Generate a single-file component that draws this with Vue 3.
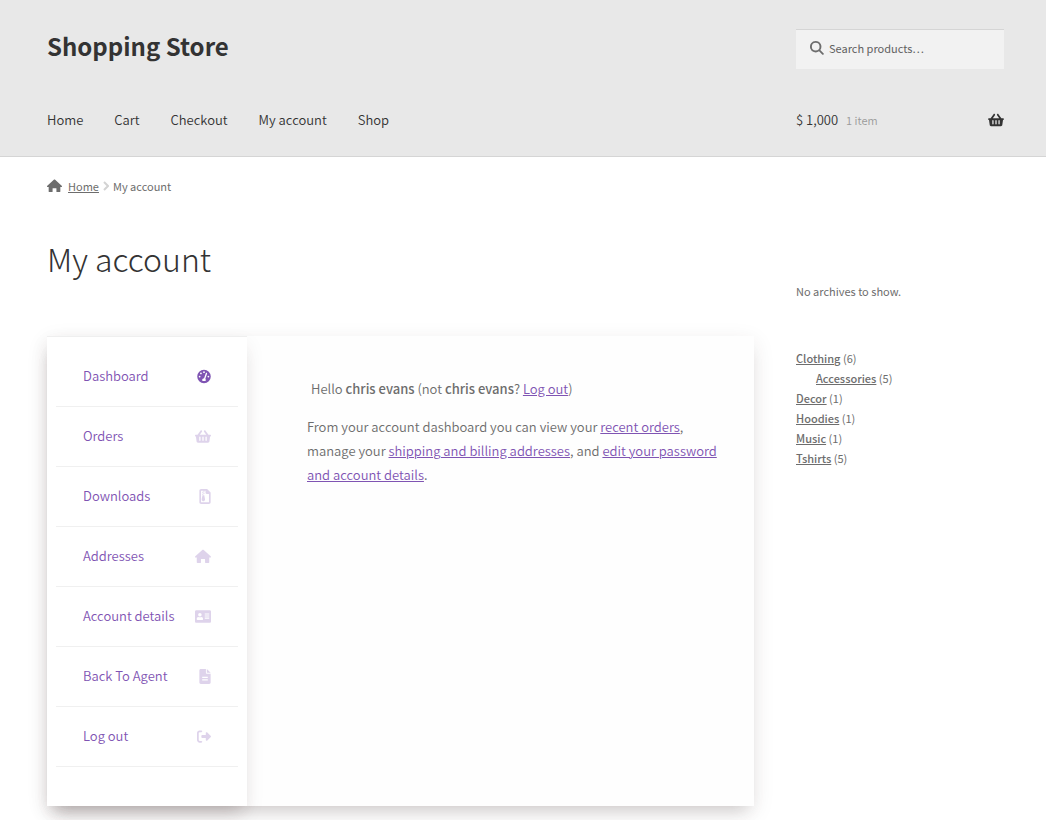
<script setup>
const basket = 'M576 216v16c0 13.255-10.745 24-24 24h-8l-26.113 182.788C514.509 462.435 494.257 480 470.37 480H105.63c-23.887 0-44.139-17.565-47.518-41.212L32 256h-8c-13.255 0-24-10.745-24-24v-16c0-13.255 10.745-24 24-24h67.341l106.78-146.821c10.395-14.292 30.407-17.453 44.701-7.058 14.293 10.395 17.453 30.408 7.058 44.701L170.477 192h235.046L326.12 82.821c-10.395-14.292-7.234-34.306 7.059-44.701 14.291-10.395 34.306-7.235 44.701 7.058L484.659 192H552c13.255 0 24 10.745 24 24zM312 392V280c0-13.255-10.745-24-24-24s-24 10.745-24 24v112c0 13.255 10.745 24 24 24s24-10.745 24-24zm112 0V280c0-13.255-10.745-24-24-24s-24 10.745-24 24v112c0 13.255 10.745 24 24 24s24-10.745 24-24zm-224 0V280c0-13.255-10.745-24-24-24s-24 10.745-24 24v112c0 13.255 10.745 24 24 24s24-10.745 24-24z'
const home = 'M262 19c15-13 37-13 52 0l250 232c20 18 13 43-14 43h-38v172c0 15-10 24-24 24H378c-10 0-16-6-16-16V362c0-10-6-16-16-16H230c-10 0-16 6-16 16v112c0 10-6 16-16 16H88c-14 0-24-9-24-24V294H26c-27 0-34-25-14-43z'

const nav = ['Home', 'Cart', 'Checkout', 'My account', 'Shop']

const accountMenu = [
  {
    label: 'Dashboard',
    box: '0 0 512 512',
    path: 'M256 8a248 248 0 1 0 0 496a248 248 0 1 0 0-496zM256 64a32 32 0 1 1 0 64a32 32 0 1 1 0-64zM144 112a32 32 0 1 1 0 64a32 32 0 1 1 0-64zM96 224a32 32 0 1 1 0 64a32 32 0 1 1 0-64zM416 224a32 32 0 1 1 0 64a32 32 0 1 1 0-64zM352 121c13 5 20 18 16 31l-63 189c9 11 15 27 15 43c0 16-3 24-8 32H200c-5-8-8-16-8-32c0-35 29-64 67-64l63-184c4-12 17-19 30-15z',
    size: 'round',
    active: true,
  },
  { label: 'Orders', box: '0 0 576 512', path: basket, size: 'wide' },
  {
    label: 'Downloads',
    box: '0 0 384 512',
    path: 'M60 0h204l120 120v332c0 33-27 60-60 60H60c-33 0-60-27-60-60V60C0 27 27 0 60 0zM56 56v400h272V170H250c-22 0-40-18-40-40V56h-34v36h-40V56zM96 92h40v36H96zM136 128h40v36h-40zM96 164h40v36H96zM106 216h60l26 124c8 45-18 76-56 76s-64-31-56-76z',
    size: 'narrow',
  },
  { label: 'Addresses', box: '0 0 576 512', path: home, size: 'wide' },
  {
    label: 'Account details',
    box: '0 0 576 512',
    path: 'M48 32h480c27 0 48 21 48 48v352c0 27-21 48-48 48H48c-27 0-48-21-48-48V80c0-27 21-48 48-48zM176 128a64 64 0 1 0 0 128a64 64 0 1 0 0-128zM120 272c-34 0-56 26-56 58v38c0 10 6 16 16 16h192c10 0 16-6 16-16v-38c0-32-22-58-56-58c-36 20-76 20-112 0zM352 144v40h160v-40zM352 220v40h160v-40zM352 296v40h160v-40z',
    size: 'wide',
  },
  {
    label: 'Back To Agent',
    box: '0 0 384 512',
    path: 'M48 0h176v136c0 14 10 24 24 24h136v304c0 27-21 48-48 48H48c-27 0-48-21-48-48V48C0 21 21 0 48 0zM256 0l128 128H256zM96 264v40h192v-40zM96 352v40h192v-40z',
    size: 'narrow',
  },
  {
    label: 'Log out',
    box: '0 0 512 512',
    path: 'M160 96c18 0 32-14 32-32s-14-32-32-32H96C43 32 0 75 0 128v256c0 53 43 96 96 96h64c18 0 32-14 32-32s-14-32-32-32H96c-18 0-32-14-32-32V128c0-18 14-32 32-32zM505 273c9-9 9-24 0-34L377 111c-9-9-23-12-35-7s-20 17-20 30v66H192c-18 0-32 14-32 32v48c0 18 14 32 32 32h130v66c0 13 8 25 20 30s26 2 35-7z',
    size: 'round',
  },
]

const categories = [
  { name: 'Clothing', count: 6, children: [{ name: 'Accessories', count: 5 }] },
  { name: 'Decor', count: 1 },
  { name: 'Hoodies', count: 1 },
  { name: 'Music', count: 1 },
  { name: 'Tshirts', count: 5 },
]
</script>

<template>
  <div class="page">
    <header class="site-header">
      <div class="columns brand-row">
        <a class="site-title" href="#">Shopping Store</a>
        <form class="search" role="search" @submit.prevent>
          <svg class="search-icon" viewBox="0 0 512 512" aria-hidden="true">
            <path fill-rule="evenodd" d="M208 0a208 208 0 1 0 122 376l124 124c9 9 24 9 33 0l14-14c9-9 9-24 0-33L377 329A208 208 0 0 0 208 0zM208 68a140 140 0 1 1 0 280a140 140 0 1 1 0-280z" />
          </svg>
          <input type="search" placeholder="Search products…" aria-label="Search products" />
        </form>
      </div>
      <div class="columns nav-row">
        <nav class="main-nav" aria-label="Primary">
          <a v-for="item in nav" :key="item" href="#">{{ item }}</a>
        </nav>
        <a class="cart" href="#">
          <span>$ 1,000</span>
          <span class="cart-count">1 item</span>
          <svg class="cart-icon" viewBox="0 0 576 512" aria-hidden="true"><path :d="basket" /></svg>
        </a>
      </div>
    </header>

    <nav class="breadcrumb" aria-label="Breadcrumb">
      <svg class="crumb-home" viewBox="0 0 576 512" aria-hidden="true"><path :d="home" /></svg>
      <a href="#">Home</a>
      <svg class="crumb-sep" viewBox="0 0 6 10" aria-hidden="true"><path d="M1 1l4 4l-4 4" /></svg>
      <span>My account</span>
    </nav>

    <div class="columns content">
      <main>
        <h1>My account</h1>
        <div class="account">
          <nav class="account-menu" aria-label="Account">
            <ul>
              <li v-for="item in accountMenu" :key="item.label">
                <a href="#" :class="{ active: item.active }">
                  {{ item.label }}
                  <svg :class="item.size" :viewBox="item.box" aria-hidden="true">
                    <path fill-rule="evenodd" :d="item.path" />
                  </svg>
                </a>
              </li>
            </ul>
          </nav>
          <section class="account-body">
            <p class="hello">
              Hello <strong>chris evans</strong> (not <strong>chris evans</strong>? <a href="#">Log out</a>)
            </p>
            <p>
              From your account dashboard you can view your <a href="#">recent orders</a>, manage your
              <a href="#">shipping and billing addresses</a>, and
              <a href="#">edit your password and account details</a>.
            </p>
          </section>
        </div>
      </main>

      <aside>
        <p>No archives to show.</p>
        <ul class="categories">
          <li v-for="cat in categories" :key="cat.name">
            <a href="#">{{ cat.name }}</a> ({{ cat.count }})
            <ul v-if="cat.children">
              <li v-for="child in cat.children" :key="child.name">
                <a href="#">{{ child.name }}</a> ({{ child.count }})
              </li>
            </ul>
          </li>
        </ul>
      </aside>
    </div>
  </div>
</template>

<style>
body {
  background: #fff;
}
</style>

<style scoped>
.page {
  font-family: "Noto Sans CJK SC", sans-serif;
  font-size: 13px;
  font-weight: 350;
  line-height: 24px;
  color: #6d6d6d;
}

.page * {
  box-sizing: border-box;
}

ul {
  list-style: none;
  margin: 0;
  padding: 0;
}

p {
  margin: 0;
}

.columns {
  display: grid;
  grid-template-columns: minmax(0, 1fr) 208px;
  column-gap: 42px;
  padding: 0 42px 0 47px;
}

.site-header {
  background: #e8e8e8;
  border-bottom: 1px solid #d5d5d5;
  padding-top: 29px;
}

.site-title {
  color: #333;
  font-size: 24px;
  font-weight: 700;
  line-height: 34px;
  text-decoration: none;
}

.search {
  display: flex;
  align-items: center;
  gap: 5px;
  height: 40px;
  padding: 0 14px 3px;
  background: #f2f2f2;
  border-top: 1px solid #d5d5d5;
}

.search-icon {
  flex: none;
  width: 14px;
  height: 14px;
  fill: #6d6d6d;
}

.search input {
  flex: 1;
  min-width: 0;
  padding: 0;
  border: 0;
  outline: 0;
  background: transparent;
  color: #6d6d6d;
  font: inherit;
  font-size: 11px;
  font-weight: 400;
}

.search input::placeholder {
  color: #616161;
}

.nav-row {
  padding-top: 39px;
  padding-bottom: 24px;
}

.main-nav {
  display: flex;
  gap: 31px;
}

.main-nav a,
.cart {
  color: #333;
  text-decoration: none;
}

.cart {
  display: flex;
  align-items: center;
  gap: 8px;
}

.cart-count {
  font-size: 11px;
  color: #9a9a9a;
}

.cart-icon {
  width: 16px;
  height: 14px;
  margin-left: auto;
  fill: #333;
}

.breadcrumb {
  display: flex;
  align-items: center;
  font-size: 11px;
  font-weight: 400;
  padding: 17px 47px;
}

.breadcrumb a {
  color: inherit;
  margin-left: 6px;
}

.crumb-home {
  width: 15px;
  height: 14px;
  fill: #6d6d6d;
}

.crumb-sep {
  width: 6px;
  height: 10px;
  margin: 0 4px;
  fill: none;
  stroke: #d3d3d3;
  stroke-width: 2;
}

.content {
  padding-bottom: 14px;
}

h1 {
  margin: 0 0 51px;
  padding-top: 17px;
  font-size: 32px;
  font-weight: 300;
  line-height: 53px;
  color: #333;
}

.account {
  display: flex;
  min-height: 470px;
  background: #fefefe;
  box-shadow: 0 12px 16px -8px rgba(60, 50, 50, 0.18), 0 6px 20px rgba(60, 40, 40, 0.1);
}

.account-menu {
  flex: none;
  width: 200px;
  padding: 10px 9px 9px;
  background: #fff;
  border-top: 1px solid #efefef;
  box-shadow: 0 12px 16px -8px rgba(60, 40, 40, 0.18), 0 8px 18px rgba(60, 40, 40, 0.08);
}

.account-menu li {
  border-bottom: 1px solid #f0f0f0;
}

.account-menu a {
  display: flex;
  align-items: center;
  justify-content: space-between;
  height: 59px;
  padding: 0 27px 2px;
  color: #7f54b3;
  text-decoration: none;
}

.account-menu svg {
  height: 15px;
  margin-top: 2px;
  fill: #7f54b3;
  opacity: 0.25;
}

.account-menu .active svg {
  opacity: 1;
}

.account-menu .round {
  width: 14px;
}

.account-menu .wide {
  width: 16px;
}

.account-menu .narrow {
  width: 12px;
}

.account-body {
  flex: 1;
  min-width: 0;
  padding: 41px 30px 41px 60px;
}

.account-body a {
  color: #7f54b3;
}

.account-body strong {
  font-weight: 500;
}

.hello {
  margin-bottom: 14px;
  padding-left: 4px;
}

aside {
  padding-top: 66px;
  font-size: 11px;
  font-weight: 400;
  line-height: 20px;
}

.categories {
  margin-top: 47px;
}

.categories ul {
  padding-left: 20px;
}

.categories a {
  color: inherit;
  font-weight: 500;
}
</style>
